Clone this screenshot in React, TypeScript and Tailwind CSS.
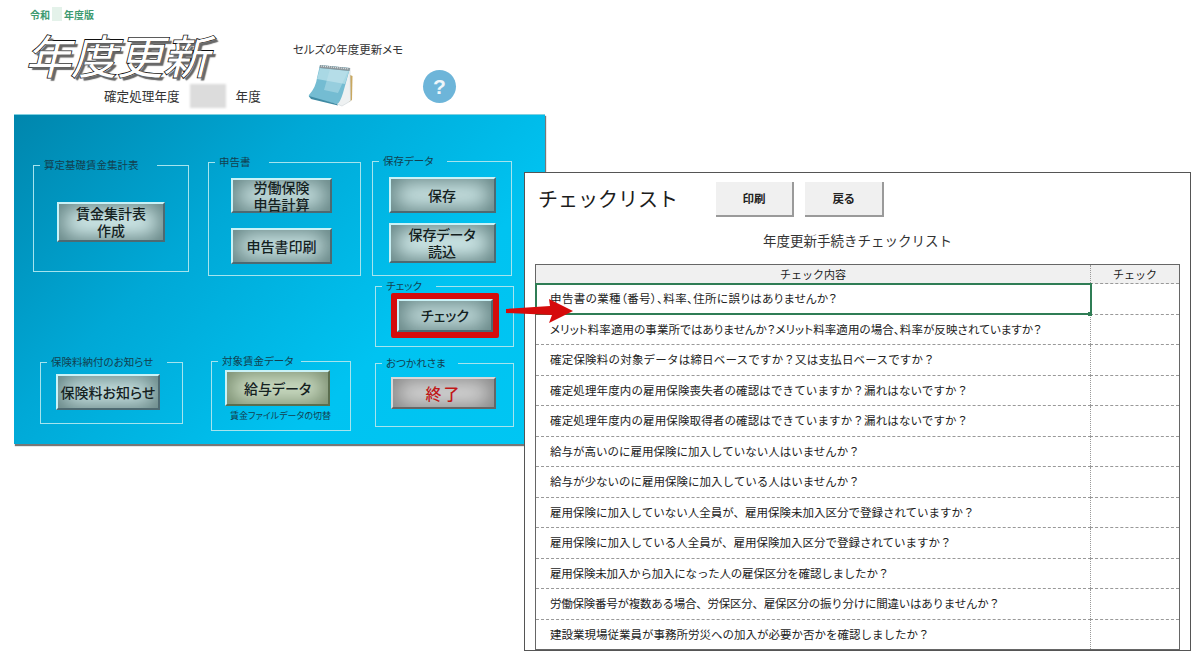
import type { FC, ReactNode } from "react";

const checkItems = [
	{ text: "申告書の業種（番号）、料率、住所に誤りはありませんか？", fit: "[font-feature-settings:'palt'] tracking-[0.4px]" },
	{ text: "メリット料率適用の事業所ではありませんか？メリット料率適用の場合、料率が反映されていますか？", fit: "[font-feature-settings:'palt'] tracking-[0.1px]" },
	{ text: "確定保険料の対象データは締日ベースですか？又は支払日ベースですか？", fit: "tracking-[0.2px]" },
	{ text: "確定処理年度内の雇用保険喪失者の確認はできていますか？漏れはないですか？", fit: "tracking-[0.13px]" },
	{ text: "確定処理年度内の雇用保険取得者の確認はできていますか？漏れはないですか？", fit: "tracking-[0.13px]" },
	{ text: "給与が高いのに雇用保険に加入していない人はいませんか？", fit: "" },
	{ text: "給与が少ないのに雇用保険に加入している人はいませんか？", fit: "" },
	{ text: "雇用保険に加入していない人全員が、雇用保険未加入区分で登録されていますか？", fit: "" },
	{ text: "雇用保険に加入している人全員が、雇用保険加入区分で登録されていますか？", fit: "" },
	{ text: "雇用保険未加入から加入になった人の雇保区分を確認しましたか？", fit: "tracking-[-0.2px]" },
	{ text: "労働保険番号が複数ある場合、労保区分、雇保区分の振り分けに間違いはありませんか？", fit: "tracking-[-0.25px]" },
	{ text: "建設業現場従業員が事務所労災への加入が必要か否かを確認しましたか？", fit: "" },
];

interface GroupProps {
	title: string;
	className: string;
	gapClass: string;
	children: ReactNode;
}

const Group: FC<GroupProps> = ({ title, className, gapClass, children }) => (
	<fieldset className={`border-[1.5px] border-[#a5e4ee] ${className}`}>
		<legend className={`ml-[6px] pl-[4px] text-[10.5px] leading-[14px] text-[#12404f] ${gapClass}`}>{title}</legend>
		{children}
	</fieldset>
);

interface BevelProps {
	className: string;
	children: ReactNode;
}

const Bevel: FC<BevelProps> = ({ className, children }) => (
	<button
		type="button"
		className={`flex flex-col items-center justify-center border-t-2 border-l-2 border-t-[#c9f2f7] border-l-[#c9f2f7] border-r-2 border-b-2 border-r-[#4d6a72] border-b-[#4d6a72] bg-[#e2fafa] font-medium text-[14px] leading-[17px] text-[#14211f] shadow-[inset_0_0_22px_5px_#5f7f7f] ${className}`}
	>
		{children}
	</button>
);

const Notepad = () => (
	<svg viewBox="0 0 50 52" className="h-[52px] w-[50px]">
		<path d="M42 15 L44.5 16 L44 40 L41 42 Z" fill="#c9a860" />
		<path d="M42 8 L42.5 41 L34 46 L29 44 Z" fill="#eef1f2" stroke="#c5ccd0" strokeWidth="0.5" />
		<path d="M12 5 L42 8 L35 33 Q32 43 29 44 L3 38 Q0 37 1 35 Q8 27 9 18 Z" fill="#74bcd2" />
		<path d="M12 8 L41 11 L37 24 L9 19 Z" fill="#a9d8e4" />
		<path d="M22 9 L40 11 L30 33 L16 30 Z" fill="#c4e5ed" opacity="0.45" />
		<path d="M1 36 L29 44 L30 45.5 L3 39 Z" fill="#3f8aa3" />
		<path d="M12 5 L42 8 L41.5 11 L11.5 8 Z" fill="#8c979c" />
		<path d="M13 6 L41 9" stroke="#dfe4e6" strokeWidth="1.2" strokeDasharray="1 1" />
	</svg>
);

const RedArrow = () => (
	<svg viewBox="0 0 70 28" className="absolute left-[505px] top-[297px] h-[28px] w-[70px]">
		<polygon points="1,12 45,9 44,2 68,14 44,26 47,18 1,16" fill="#d60b0b" />
	</svg>
);

const ChecklistWindow = () => (
	<section className="absolute left-[524px] top-[172px] flex h-[479px] w-[667px] flex-col overflow-hidden border border-[#555] bg-white text-[#222]">
		<div className="flex h-[44px] items-end pl-[13px]">
			<h2 className="w-[178px] text-[20px] font-normal leading-[36px] text-[#1c1c1c] [font-feature-settings:normal]">チェックリスト</h2>
			<button type="button" className="h-[35px] w-[78px] border-r-2 border-b-2 border-r-[#9a9a9a] border-b-[#9a9a9a] bg-[#f0f0f0] text-[11.5px] font-semibold">
				印刷
			</button>
			<button type="button" className="ml-[11px] h-[35px] w-[79px] border-r-2 border-b-2 border-r-[#9a9a9a] border-b-[#9a9a9a] bg-[#f0f0f0] text-[11.5px] font-semibold">
				戻る
			</button>
		</div>
		<p className="mt-[13px] h-[20px] text-center text-[13.5px] leading-[20px] text-[#333] [font-feature-settings:normal]">年度更新手続きチェックリスト</p>
		<table className="ml-[10px] mt-[14px] w-[645px] table-fixed border-collapse border border-[#666] text-[11.5px] text-[#222] [font-feature-settings:'pkna']">
			<thead>
				<tr className="h-[19px] bg-[#f0f0f0] text-[11px]">
					<th className="w-[555px] border-r border-dotted border-[#999] font-normal">チェック内容</th>
					<th className="font-normal">チェック</th>
				</tr>
			</thead>
			<tbody>
				{checkItems.map((item, i) => (
					<tr key={item.text} className="h-[30.5px] border-t border-dashed border-[#999]">
						<td
							className={`relative border-r border-dotted border-[#999] pl-[14px] ${item.fit} ${i === 0 ? "outline-2 -outline-offset-1 outline-[#2f7d55]" : ""}`}
						>
							{item.text}
							{i === 0 && <span className="absolute -bottom-[2px] -right-[2px] size-[4px] bg-[#2f7d55]" />}
						</td>
						<td />
					</tr>
				))}
			</tbody>
		</table>
	</section>
);

export default function App() {
	return (
		<div
			className="relative h-[656px] w-[1194px] overflow-hidden bg-white [font-family:'Noto_Sans_CJK_JP','Liberation_Sans',sans-serif] [font-feature-settings:'palt']"
		>
			<header className="flex h-[114px]">
				<div className="w-[292px]">
					<p className="flex h-[28px] items-center pl-[30px] text-[10px] font-bold text-[#3d9a70]">
						令和
						<span className="mx-[2px] h-[14px] w-[10px] bg-[#e4f2ea]" />
						年度版
					</p>
					<h1 className="h-[54px] pl-[25px] text-[46px] font-normal italic leading-[52px] text-white [-webkit-text-stroke:1.6px_#111] [paint-order:stroke_fill] [text-shadow:3px_3px_1px_#666]">
						年度更新
					</h1>
					<p className="flex h-[28px] items-center pl-[104px] text-[12.6px] text-[#333] [font-feature-settings:normal]">
						確定処理年度
						<span className="mx-[10px] h-[24px] w-[36px] bg-[#dcdcdc] blur-[1px]" />
						年度
					</p>
				</div>
				<div className="flex w-[112px] flex-col items-center pt-[41px]">
					<p className="text-[11.5px] leading-[16px] text-[#333]">セルズの年度更新メモ</p>
					<div className="mt-[3px] flex w-full pl-[16px]">
						<Notepad />
					</div>
				</div>
				<div className="ml-[19px] pt-[70px]">
					<div className="flex size-[33px] items-center justify-center rounded-full bg-[#6db5d9] text-[21px] font-bold text-[#eef6fa] [font-family:'Liberation_Sans',sans-serif]">
						?
					</div>
				</div>
			</header>

			<main className="ml-[14px] flex h-[330px] w-[531px] border-t border-[#7fd0e0] bg-[linear-gradient(135deg,#0086ad_0%,#00a8d6_35%,#00c3f1_70%,#00c6f3_100%)] pl-[19px] shadow-[1px_2px_1px_#777]">
				<div className="flex w-[175px] flex-col pt-[43px]">
					<Group title="算定基礎賃金集計表" className="h-[114px] w-[156px]" gapClass="pr-[18px]">
						<Bevel className="ml-[23px] mt-[30px] h-[40px] w-[108px]">
							<span>賃金集計表</span>
							<span>作成</span>
						</Bevel>
					</Group>
					<Group title="保険料納付のお知らせ" className="ml-[7px] mt-[83px] h-[69px] w-[143px]" gapClass="pr-[14px]">
						<Bevel className="ml-[15px] mt-[5px] h-[36px] w-[104px]">保険料お知らせ</Bevel>
					</Group>
				</div>
				<div className="flex w-[164px] flex-col pt-[40px]">
					<Group title="申告書" className="h-[121px] w-[153px]" gapClass="pr-[18px]">
						<div className="flex flex-col items-center gap-[15px] pr-[6px] pt-[9px]">
							<Bevel className="h-[35px] w-[101px]">
								<span>労働保険</span>
								<span>申告計算</span>
							</Bevel>
							<Bevel className="h-[36px] w-[101px]">申告書印刷</Bevel>
						</div>
					</Group>
					<Group title="対象賃金データ" className="ml-[3px] mt-[78px] h-[77px] w-[140px]" gapClass="pr-[8px]">
						<Bevel className="ml-[13px] mt-[2px] h-[36px] w-[105px] border-t-[#b5dcb5] border-l-[#b5dcb5] border-r-[#5a6e4f] border-b-[#5a6e4f] bg-[#e4f4dc] shadow-[inset_0_0_22px_5px_#74886a]">給与データ</Bevel>
						<p className="mt-[3px] pl-[18px] text-[9px] leading-[14px] text-[#12404f]">賃金ファイルデータの切替</p>
					</Group>
				</div>
				<div className="flex flex-col pt-[39px]">
					<Group title="保存データ" className="h-[122px] w-[140px]" gapClass="pr-[14px]">
						<div className="flex flex-col items-center gap-[10px] pt-[9px]">
							<Bevel className="h-[36px] w-[107px]">保存</Bevel>
							<Bevel className="h-[40px] w-[107px]">
								<span>保存データ</span>
								<span>読込</span>
							</Bevel>
						</div>
					</Group>
					<Group title="チェック" className="ml-[3px] mt-[3px] h-[68px] w-[139px]" gapClass="pr-[14px]">
						<div className="ml-[15px] w-[108px] rounded-[2px] border-[6px] border-[#d40c0c]">
							<Bevel className="h-[33px] w-full text-[12.5px] font-bold">チェック</Bevel>
						</div>
					</Group>
					<Group title="おつかれさま" className="ml-[3px] mt-[9px] h-[71px] w-[139px]" gapClass="pr-[12px]">
						<Bevel className="ml-[15px] mt-[7px] h-[32px] w-[105px] border-t-[#d8d8d8] border-l-[#d8d8d8] border-r-[#666] border-b-[#666] bg-[#f8f8f8] text-[16px] tracking-[2px] text-[#c01818] shadow-[inset_0_0_22px_5px_#808080]">終了</Bevel>
					</Group>
				</div>
			</main>

			<ChecklistWindow />
			<RedArrow />
		</div>
	);
}
